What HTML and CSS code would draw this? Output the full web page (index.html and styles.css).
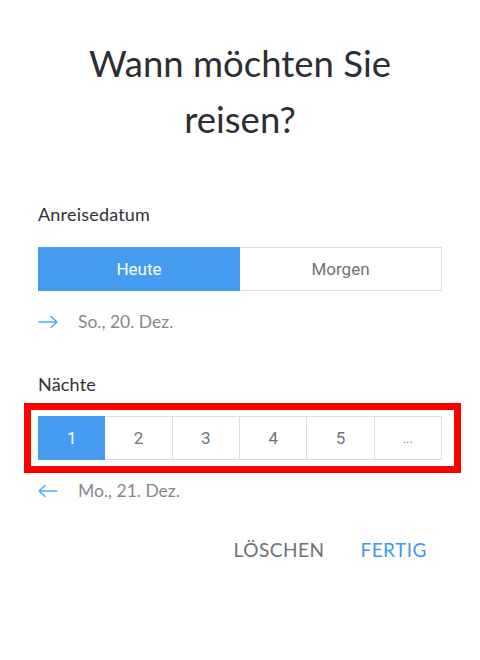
FILE: index.html
```html
<!DOCTYPE html>
<html lang="de">
<head>
    <meta charset="UTF-8">
    <meta name="viewport" content="width=device-width, initial-scale=1.0">
    <title>Reisedatum</title>
    <link rel="stylesheet" href="styles.css">
</head>
<body>
    <div class="dialog">
        <h1 class="title">Wann möchten Sie reisen?</h1>

        <div class="field checkin">
            <div class="label">Anreisedatum</div>
            <div class="segments two">
                <button class="segment active">Heute</button>
                <button class="segment">Morgen</button>
            </div>
            <div class="date-row">
                <svg class="arrow" width="20" height="14" viewBox="0 0 20 14">
                    <path d="M1 7H19M13 1.5L19 7L13 12.5" fill="none" stroke="#4aaef2" stroke-width="1.4" stroke-linecap="round" stroke-linejoin="round"/>
                </svg>
                <span>So., 20. Dez.</span>
            </div>
        </div>

        <div class="field nights">
            <div class="label">Nächte</div>
            <div class="highlight">
                <div class="segments six">
                    <button class="segment active">1</button>
                    <button class="segment">2</button>
                    <button class="segment">3</button>
                    <button class="segment">4</button>
                    <button class="segment">5</button>
                    <button class="segment more">...</button>
                </div>
            </div>
            <div class="date-row">
                <svg class="arrow" width="20" height="14" viewBox="0 0 20 14">
                    <path d="M19 7H1M7 1.5L1 7L7 12.5" fill="none" stroke="#4aaef2" stroke-width="1.4" stroke-linecap="round" stroke-linejoin="round"/>
                </svg>
                <span>Mo., 21. Dez.</span>
            </div>
        </div>

        <div class="actions">
            <button class="action">LÖSCHEN</button>
            <button class="action primary">FERTIG</button>
        </div>
    </div>
</body>
</html>
```

FILE: styles.css
```css
body {
    margin: 0;
    background-color: #fff;
    font-family: Lato, "Open Sans", sans-serif;
    color: #2b2e33;
}

.dialog {
    padding: 35px 38px 0;
}

.title {
    margin: 0 auto;
    width: 340px;
    text-align: center;
    font-size: 36.5px;
    font-weight: 400;
    line-height: 56px;
    color: #2b2e33;
}

.field.checkin {
    margin-top: 57px;
}

.field.nights {
    margin-top: 42px;
}

.label {
    font-size: 18px;
    line-height: 20px;
    letter-spacing: 0.2px;
    color: #2f3236;
}

.segments {
    display: grid;
    height: 44px;
    box-sizing: border-box;
}

.segments.two {
    grid-template-columns: 1fr 1fr;
    margin-top: 23px;
}

.segments.six {
    grid-template-columns: repeat(6, 1fr);
}

.segment {
    margin: 0;
    padding: 0;
    border: 1px solid #dadedf;
    border-left: none;
    background-color: #fff;
    font-family: Roboto, sans-serif;
    font-size: 17px;
    color: #6f7478;
}

.segment:first-child {
    border-left: 1px solid #dadedf;
}

.segment.active {
    background-color: #459cf1;
    border-color: #459cf1;
    color: #fff;
}

.segment.more {
    font-size: 13px;
    color: #7f8387;
}

.highlight {
    margin: 9px -19px 0 -14px;
    border: 7px solid #ff0000;
    padding: 6px 12px 6px 7px;
}

.date-row {
    display: flex;
    align-items: center;
    gap: 20px;
    margin-top: 21px;
    font-size: 17.5px;
    line-height: 20px;
    color: #85898d;
}

.nights .date-row {
    margin-top: 8px;
}

.arrow {
    flex-shrink: 0;
}

.actions {
    display: flex;
    justify-content: flex-end;
    gap: 36px;
    margin-top: 39px;
    padding-right: 15px;
}

.action {
    margin: 0;
    padding: 0;
    border: none;
    background: none;
    font-family: Lato, sans-serif;
    font-size: 19px;
    line-height: 20px;
    letter-spacing: 0.5px;
    color: #6d7175;
}

.action.primary {
    color: #3f98f0;
}
```
